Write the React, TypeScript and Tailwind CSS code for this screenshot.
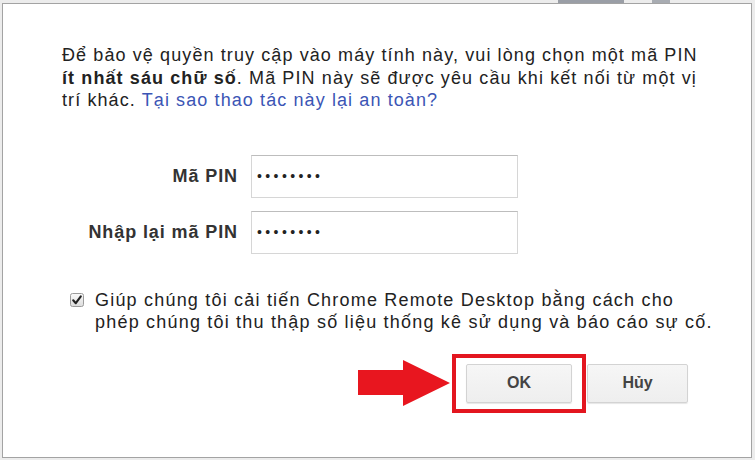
import React from 'react';

const FONT = { fontFamily: '"Liberation Sans", Arial, sans-serif' };

function Checkbox() {
  return (
    <svg width="14" height="14" viewBox="0 0 14 14" className="shrink-0">
      <defs>
        <linearGradient id="cbg" x1="0" y1="0" x2="0" y2="1">
          <stop offset="0" stopColor="#fafafa" />
          <stop offset="1" stopColor="#dcdcdc" />
        </linearGradient>
      </defs>
      <rect x="0.5" y="0.5" width="13" height="13" rx="2" fill="url(#cbg)" stroke="#9b9b9b" />
      <path d="M3.2 7.3 L5.8 10.2 L10.8 3.4" fill="none" stroke="#222" strokeWidth="2.1" strokeLinecap="round" strokeLinejoin="round" />
    </svg>
  );
}

function Arrow() {
  return (
    <svg width="92" height="46" viewBox="0 0 92 46" className="shrink-0">
      <path d="M0 10 H45 V0 L92 23 L45 46 V35 H0 Z" fill="#e8161f" />
    </svg>
  );
}

function PinRow({ label }: { label: string }) {
  return (
    <div className="flex items-center">
      <div className="w-[248px] pr-[13px] text-right text-[18px] font-bold tracking-[0.9px] text-[#333]">
        {label}
      </div>
      <div className="flex h-[43px] w-[267px] items-center border border-[#d6d6d6] border-t-[#bdbdbd] bg-white pl-[5px] text-[14px] tracking-[3.4px] text-[#222]">
        ••••••••
      </div>
    </div>
  );
}

export default function App() {
  return (
    <div className="h-[460px] w-[755px] overflow-hidden bg-[#ececec]" style={FONT}>
      <div className="relative ml-[2px] mt-[3px] h-[455px] w-[750px] border border-[#a3a3a3] bg-white">
        {/* bits of the window behind the dialog */}
        <div className="absolute -top-[4px] left-[555px] h-[3px] w-[66px] bg-[#9a9ea6]" />
        <div className="absolute -top-[4px] left-[649px] h-[3px] w-[18px] bg-[#a8acb2]" />

        <p className="ml-[59px] mt-[40px] whitespace-nowrap text-[18px] leading-[22.5px] tracking-[1.1px] text-[#222]">
          Để bảo vệ quyền truy cập vào máy tính này, vui lòng chọn một mã PIN
          <br />
          <b>ít nhất sáu chữ số</b>. Mã PIN này sẽ được yêu cầu khi kết nối từ một vị
          <br />
          trí khác. <span className="text-[#3b55b5]">Tại sao thao tác này lại an toàn?</span>
        </p>

        <div className="mt-[43px] flex flex-col gap-[13px]">
          <PinRow label="Mã PIN" />
          <PinRow label="Nhập lại mã PIN" />
        </div>

        <div className="ml-[67px] mt-[35px] flex items-start gap-[11px]">
          <div className="pt-[4px]">
            <Checkbox />
          </div>
          <p className="whitespace-nowrap text-[18px] leading-[22.5px] tracking-[1.2px] text-[#222]">
            Giúp chúng tôi cải tiến Chrome Remote Desktop bằng cách cho
            <br />
            phép chúng tôi thu thập số liệu thống kê sử dụng và báo cáo sự cố.
          </p>
        </div>

        <div className="ml-[355px] mt-[20px] flex items-center">
          <Arrow />
          <div className="ml-[2px] border-[4px] border-[#e3161f] px-[10px] py-[6px]">
            <button className="h-[39px] w-[106px] rounded-[2px] border border-[#d3d3d3] bg-gradient-to-b from-[#f6f6f6] to-[#eeeeee] text-[16px] font-bold text-[#444] shadow-[0_1px_1px_rgba(0,0,0,0.1)]">
              OK
            </button>
          </div>
          <button className="ml-[1px] h-[39px] w-[101px] rounded-[2px] border border-[#d3d3d3] bg-gradient-to-b from-[#f6f6f6] to-[#eeeeee] text-[16px] font-bold text-[#444] shadow-[0_1px_1px_rgba(0,0,0,0.1)]">
            Hủy
          </button>
        </div>
      </div>
    </div>
  );
}
